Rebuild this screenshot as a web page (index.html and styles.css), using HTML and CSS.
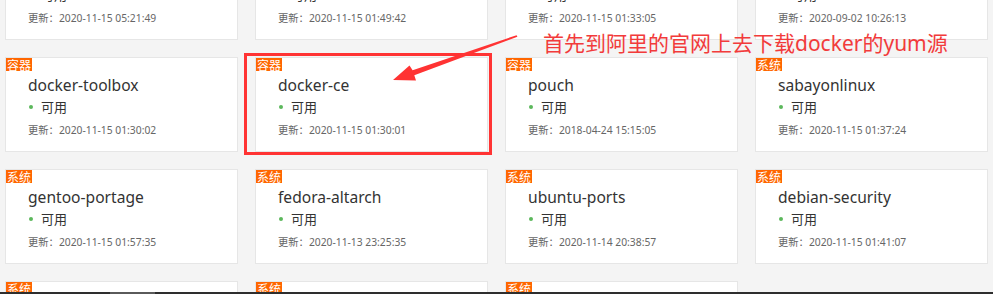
FILE: index.html
```html
<!DOCTYPE html>
<html lang="zh-CN">
<head>
    <meta charset="UTF-8">
    <meta name="viewport" content="width=device-width, initial-scale=1.0">
    <title>镜像列表</title>
    <link rel="stylesheet" href="styles.css">
</head>
<body>
    <div class="mirrors">
        <div class="card">
            <span class="tag">系统</span>
            <div class="name">centos-vault</div>
            <div class="state"><i class="dot"></i>可用</div>
            <div class="time">更新：2020-11-15 05:21:49</div>
        </div>
        <div class="card">
            <span class="tag">系统</span>
            <div class="name">fedora</div>
            <div class="state"><i class="dot"></i>可用</div>
            <div class="time">更新：2020-11-15 01:49:42</div>
        </div>
        <div class="card">
            <span class="tag">系统</span>
            <div class="name">opensuse</div>
            <div class="state"><i class="dot"></i>可用</div>
            <div class="time">更新：2020-11-15 01:33:05</div>
        </div>
        <div class="card">
            <span class="tag">系统</span>
            <div class="name">raspbian</div>
            <div class="state"><i class="dot"></i>可用</div>
            <div class="time">更新：2020-09-02 10:26:13</div>
        </div>

        <div class="card">
            <span class="tag">容器</span>
            <div class="name">docker-toolbox</div>
            <div class="state"><i class="dot"></i>可用</div>
            <div class="time">更新：2020-11-15 01:30:02</div>
        </div>
        <div class="card">
            <span class="tag">容器</span>
            <div class="name">docker-ce</div>
            <div class="state"><i class="dot"></i>可用</div>
            <div class="time">更新：2020-11-15 01:30:01</div>
        </div>
        <div class="card">
            <span class="tag">容器</span>
            <div class="name">pouch</div>
            <div class="state"><i class="dot"></i>可用</div>
            <div class="time">更新：2018-04-24 15:15:05</div>
        </div>
        <div class="card">
            <span class="tag">系统</span>
            <div class="name">sabayonlinux</div>
            <div class="state"><i class="dot"></i>可用</div>
            <div class="time">更新：2020-11-15 01:37:24</div>
        </div>

        <div class="card">
            <span class="tag">系统</span>
            <div class="name">gentoo-portage</div>
            <div class="state"><i class="dot"></i>可用</div>
            <div class="time">更新：2020-11-15 01:57:35</div>
        </div>
        <div class="card">
            <span class="tag">系统</span>
            <div class="name">fedora-altarch</div>
            <div class="state"><i class="dot"></i>可用</div>
            <div class="time">更新：2020-11-13 23:25:35</div>
        </div>
        <div class="card">
            <span class="tag">系统</span>
            <div class="name">ubuntu-ports</div>
            <div class="state"><i class="dot"></i>可用</div>
            <div class="time">更新：2020-11-14 20:38:57</div>
        </div>
        <div class="card">
            <span class="tag">系统</span>
            <div class="name">debian-security</div>
            <div class="state"><i class="dot"></i>可用</div>
            <div class="time">更新：2020-11-15 01:41:07</div>
        </div>

        <div class="card">
            <span class="tag">系统</span>
            <div class="name">kali</div>
            <div class="state"><i class="dot"></i>可用</div>
            <div class="time">更新：2020-11-15 01:20:11</div>
        </div>
        <div class="card">
            <span class="tag">系统</span>
            <div class="name">archlinux</div>
            <div class="state"><i class="dot"></i>可用</div>
            <div class="time">更新：2020-11-15 01:12:40</div>
        </div>
        <div class="card">
            <span class="tag">系统</span>
            <div class="name">alpine</div>
            <div class="state"><i class="dot"></i>可用</div>
            <div class="time">更新：2020-11-15 01:05:19</div>
        </div>
    </div>

    <!-- screenshot annotation -->
    <div class="mark-box"></div>
    <svg class="mark-arrow" width="993" height="294" viewBox="0 0 993 294">
        <polygon points="393,80 416,80.5 414.3,75.2 517.4,36.8 516.6,35.2 412.6,70.2 409.5,65.5" fill="#f33"/>
    </svg>
    <div class="mark-text">首先到阿里的官网上去下载docker的yum源</div>

    <div class="hscroll"><div class="thumb"></div></div>
</body>
</html>
```

FILE: styles.css
```css
* {
    margin: 0;
    padding: 0;
    box-sizing: border-box;
}

body {
    background: #f4f4f4;
    font-family: 'Noto Sans', 'Noto Sans CJK SC', sans-serif;
    height: 294px;
    overflow: hidden;
    position: relative;
}

.mirrors {
    display: grid;
    grid-template-columns: repeat(4, 233px);
    grid-auto-rows: 95px;
    column-gap: 17px;
    row-gap: 17px;
    padding-left: 5px;
    margin-top: -55px;
}

.card {
    position: relative;
    background: #ffffff;
    border: 1px solid #e6e6e6;
    padding: 16px 0 0 22px;
}

.tag {
    position: absolute;
    top: 0;
    left: 0;
    background: #ff6600;
    color: #ffffff;
    font-size: 12px;
    line-height: 13px;
    height: 13px;
    padding: 0 1px;
    font-family: 'Noto Sans CJK SC', sans-serif;
}

.name {
    font-size: 15.6px;
    line-height: 22px;
    color: #333333;
}

.state {
    display: flex;
    align-items: center;
    font-size: 13px;
    line-height: 22px;
    color: #333333;
    font-family: 'Noto Sans CJK SC', sans-serif;
}

.dot {
    width: 4px;
    height: 4px;
    border-radius: 50%;
    background: #5cb85c;
    margin: 0 8px 0 1px;
}

.time {
    font-size: 10.3px;
    line-height: 20px;
    color: #666666;
    margin-top: 2px;
}

.mark-box {
    position: absolute;
    left: 244px;
    top: 53px;
    width: 248px;
    height: 102px;
    border: 3px solid #ff3333;
}

.mark-arrow {
    position: absolute;
    left: 0;
    top: 0;
    pointer-events: none;
}

.mark-text {
    position: absolute;
    left: 543px;
    top: 30px;
    font-size: 21px;
    line-height: 26px;
    color: #f23b3b;
    white-space: nowrap;
}

.hscroll {
    position: fixed;
    left: 0;
    right: 0;
    bottom: 0;
    height: 2px;
    background: #2e2e2e;
}

.hscroll .thumb {
    margin-left: 110px;
    width: 45px;
    height: 2px;
    background: #5a5a5a;
}
```
